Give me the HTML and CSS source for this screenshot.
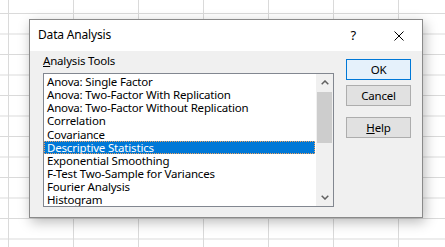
FILE: index.html
```html
<!DOCTYPE html>
<html>
<head>
<meta charset="utf-8">
<link rel="stylesheet" href="styles.css">
</head>
<body>
<div class="desktop">
  <div class="dialog">
    <div class="titlebar">
      <span class="title">Data Analysis</span>
      <span class="help-q">?</span>
      <svg class="close" width="10" height="10" viewBox="0 0 10 10"><path d="M0.5 0.5 L9.5 9.5 M9.5 0.5 L0.5 9.5" stroke="#000" stroke-width="1" fill="none"/></svg>
    </div>
    <div class="content">
      <div class="left">
        <div class="label"><u>A</u>nalysis Tools</div>
        <div class="listbox">
          <ul class="items">
            <li>Anova: Single Factor</li>
            <li>Anova: Two-Factor With Replication</li>
            <li>Anova: Two-Factor Without Replication</li>
            <li>Correlation</li>
            <li>Covariance</li>
            <li class="selected">Descriptive Statistics</li>
            <li>Exponential Smoothing</li>
            <li>F-Test Two-Sample for Variances</li>
            <li>Fourier Analysis</li>
            <li>Histogram</li>
          </ul>
          <div class="scrollbar">
            <div class="arrow">
              <svg width="8" height="5" viewBox="0 0 8 5"><path d="M0.7 4.3 L4 1 L7.3 4.3" stroke="#606060" stroke-width="1.5" fill="none"/></svg>
            </div>
            <div class="track"><div class="thumb"></div></div>
            <div class="arrow">
              <svg width="8" height="5" viewBox="0 0 8 5"><path d="M0.7 0.7 L4 4 L7.3 0.7" stroke="#606060" stroke-width="1.5" fill="none"/></svg>
            </div>
          </div>
        </div>
      </div>
      <div class="buttons">
        <div class="btn default">OK</div>
        <div class="btn">Cancel</div>
        <div class="btn help"><u>H</u>elp</div>
      </div>
    </div>
  </div>
</div>
</body>
</html>
```
FILE: styles.css
```css
html, body {
  margin: 0;
  padding: 0;
}
body {
  width: 445px;
  height: 247px;
  overflow: hidden;
  font-family: "Noto Sans", "DejaVu Sans", sans-serif;
  font-size: 11.5px;
  letter-spacing: -0.18px;
  color: #000;
}
.desktop {
  position: relative;
  width: 445px;
  height: 247px;
  background-color: #fff;
  background-image:
    linear-gradient(to right, #dadada 0, #dadada 1px, transparent 1px),
    linear-gradient(to bottom, #dadada 0, #dadada 1px, transparent 1px);
  background-size: 65px 100%, 100% 20.5px;
  background-position: 8px 0, 0 13px;
}
.dialog {
  position: absolute;
  left: 29px;
  top: 19px;
  width: 392px;
  height: 197px;
  border: 1px solid #8a8a8a;
  background: #f0f0f0;
  box-shadow: 2px 4px 12px rgba(0, 0, 0, 0.28);
  display: flex;
  flex-direction: column;
}
.titlebar {
  height: 31px;
  background: #fff;
  display: flex;
  align-items: center;
  padding: 0 18px 0 8px;
}
.title {
  flex: 1;
  font-size: 12px;
  line-height: 16px;
  padding-bottom: 1px;
}
.help-q {
  font-size: 13px;
  line-height: 16px;
  margin-right: 38px;
  padding-bottom: 1px;
}
.close {
  display: block;
}
.content {
  flex: 1;
  display: flex;
  padding: 2px 11px 0 13px;
  gap: 12px;
}
.left {
  display: flex;
  flex-direction: column;
}
.label {
  line-height: 16px;
  margin-bottom: 4px;
}
.listbox {
  width: 289px;
  height: 132px;
  border: 1px solid #828790;
  background: #fff;
  display: flex;
  overflow: hidden;
}
.items {
  list-style: none;
  margin: 0;
  padding: 1px 1px 0 0;
  flex: 1;
}
.items li {
  line-height: 13.15px;
  height: 13.15px;
  padding-left: 3px;
  white-space: nowrap;
}
.items li.selected {
  background: #0078d7;
  color: #fff;
  outline: 1px dotted #f2a35e;
  outline-offset: -1px;
}
.scrollbar {
  width: 17px;
  background: #f0f0f0;
  display: flex;
  flex-direction: column;
}
.arrow {
  height: 17px;
  display: flex;
  align-items: center;
  justify-content: center;
}
.track {
  flex: 1;
  padding: 1px 1px 0 1px;
}
.thumb {
  height: 51px;
  background: #cdcdcd;
}
.buttons {
  display: flex;
  flex-direction: column;
  padding-top: 6px;
}
.btn {
  width: 63px;
  height: 19px;
  border: 1px solid #adadad;
  background: #e1e1e1;
  text-align: center;
  line-height: 19px;
  margin-bottom: 5px;
}
.btn.default {
  border-color: #0078d7;
  background: #e5f1fb;
}
.btn.help {
  margin-top: 6px;
}
```
